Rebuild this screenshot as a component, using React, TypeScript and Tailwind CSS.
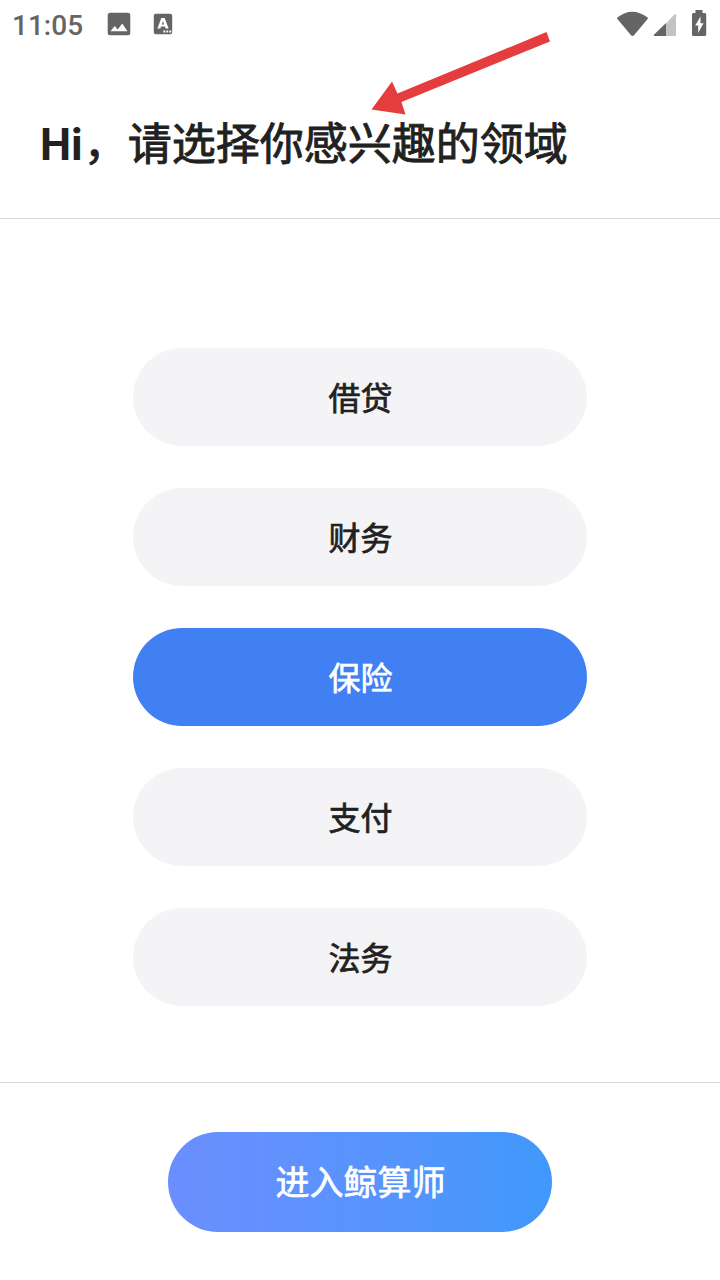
import React from "react";

const topics = ["借贷", "财务", "保险", "支付", "法务"];

function StatusBar() {
  return (
    <header className="flex h-12 items-center justify-between pl-3 pr-[13px] text-[#656565]">
      <div className="flex items-center">
        <span className="w-[95px] pt-[3px] text-[28px] font-medium leading-none">11:05</span>
        <svg className="h-6 w-6" viewBox="0 0 24 24">
          <path fill="currentColor" fillRule="evenodd" d="M3.200.8h17.600a2.500 2.500 0 0 1 2.500 2.500v17.400a2.500 2.500 0 0 1-2.500 2.500H3.200A2.500 2.500 0 0 1 .7 20.700V3.300A2.500 2.500 0 0 1 3.200.8ZM3.500 19.200h17l-5.300-7.600-4.500 5.800-3-3.400Z" />
        </svg>
        <svg className="ml-[22px] h-6 w-5" viewBox="0 0 20 24">
          <path fill="currentColor" fillRule="evenodd" d="M2.800 1.700h14.400A2 2 0 0 1 19.200 3.700v16.600a2 2 0 0 1-2 2H2.800a2 2 0 0 1-2-2V3.700a2 2 0 0 1 2-2ZM8.300 6 4.400 16.500h3l.6-1.900h4l.6 1.900h3L11.700 6ZM10 9l1.100 3.400H8.900ZM10.300 18.500v1.900h1.900v-1.900Zm3 0v1.900h1.900v-1.900Zm3 0v1.900h1.900v-1.900Z" />
        </svg>
      </div>
      <div className="flex items-center">
        <svg className="h-7 w-8" viewBox="616 10 32 28">
          <path fill="currentColor" d="M617.400 17.500Q632 6 647.600 17.500 648.300 18.300 647.600 19L634 35.200Q632.500 36.800 631 35.200L617.400 19Q616.600 18.300 617.400 17.500Z" />
        </svg>
        <svg className="ml-[5px] h-7 w-6" viewBox="653 10 24 28">
          <path fill="#c3c3c3" d="M666 23.500 674.200 14.700Q676 13 676 15v21h-10Z" />
          <path fill="currentColor" d="M666 23v13h-11q-2 0-.8-1.500Z" />
        </svg>
        <svg className="ml-[14px] h-7 w-4" viewBox="691 10 16 28">
          <path fill="currentColor" fillRule="evenodd" d="M695.500 10h7v3h2.200q1.500 0 1.500 1.500v20q0 1.500-1.500 1.500h-11.200q-1.500 0-1.500-1.500v-20q0-1.500 1.500-1.500h2ZM700.500 16.500l-5.300 9h3V33l5.300-9.700h-3Z" />
        </svg>
      </div>
    </header>
  );
}

export default function App() {
  return (
    <div className="relative flex h-[1280px] w-[720px] flex-col overflow-hidden bg-white font-['Roboto','Noto_Sans_CJK_SC',sans-serif] text-[#212121]">
      <StatusBar />
      <div className="flex h-[171px] items-center border-b border-[#d8d8d8] pl-10 pt-[23px]">
        <h1 className="text-[44px] leading-none">
          <span className="font-bold">Hi</span>
          <span className="ml-px font-normal [-webkit-text-stroke:0.9px_currentColor]">，请选择你感兴趣的领域</span>
        </h1>
      </div>
      <main className="flex h-[864px] flex-col items-center gap-[42px] border-b border-[#d8d8d8] pt-[129px]">
        {topics.map((topic) => (
          <button
            key={topic}
            className={`h-[98px] w-[454px] shrink-0 rounded-full pl-px pt-[3px] text-[32px] font-normal [-webkit-text-stroke:0.7px_currentColor] ${topic === "保险" ? "bg-[#4080f2] text-white" : "bg-[#f4f4f6]"}`}
          >
            {topic}
          </button>
        ))}
      </main>
      <footer className="flex justify-center pt-[49px]">
        <button className="h-[100px] w-[384px] rounded-full bg-linear-to-r from-[#6b8eff] to-[#4098fb] pl-px pt-[2px] text-[34px] font-normal text-white [-webkit-text-stroke:0.7px_currentColor]">进入鲸算师</button>
      </footer>
      <svg className="pointer-events-none absolute left-[370px] top-[30px] h-[90px] w-[182px]" viewBox="370 30 182 90">
        <path fill="#e53d3d" d="M546.500 32 550 41.500 401.500 102 405.500 114.500 371.500 109.500 392 81.500 397.500 93.500Z" />
      </svg>
    </div>
  );
}
